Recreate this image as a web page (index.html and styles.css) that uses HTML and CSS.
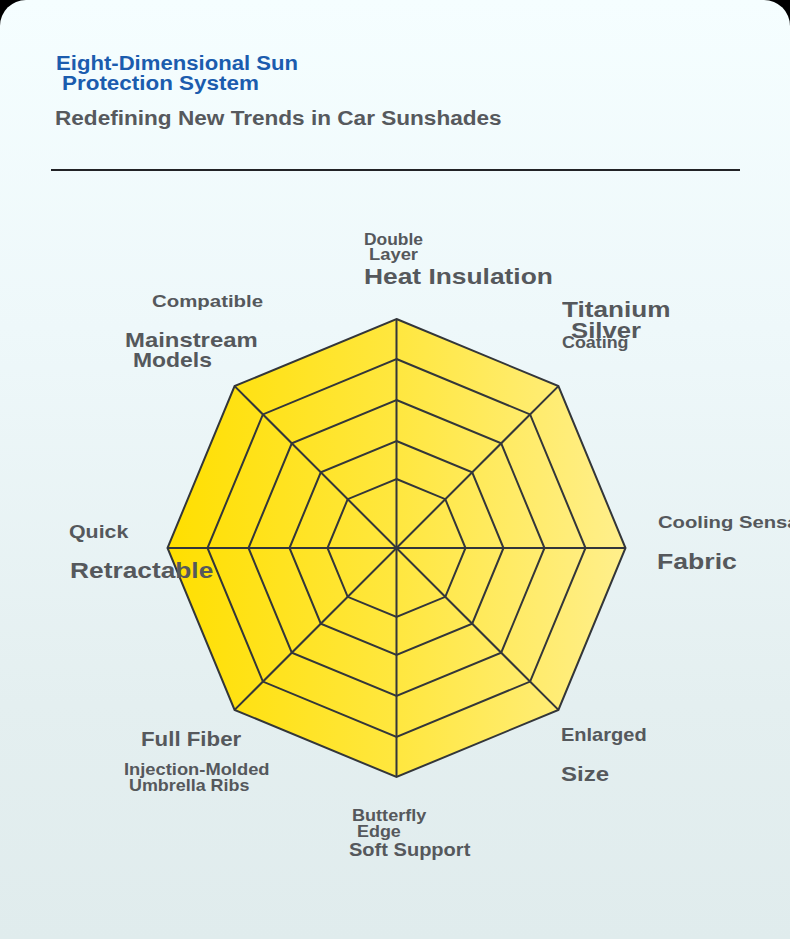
FILE: index.html
```html
<!DOCTYPE html>
<html lang="en">
<head>
<meta charset="utf-8">
<title>Eight-Dimensional Sun Protection System</title>
<link rel="stylesheet" href="styles.css">
</head>
<body>
<div class="page">
  <header class="header">
    <h1 class="title">
      <span class="title-line title-line--one">Eight-Dimensional Sun</span>
      <span class="title-line title-line--two">Protection System</span>
    </h1>
    <p class="subtitle">Redefining New Trends in Car Sunshades</p>
    <div class="rule"></div>
  </header>

  <section class="chart">
    <svg class="radar" width="790" height="769" viewBox="0 0 790 769" xmlns="http://www.w3.org/2000/svg">
      <defs>
        <linearGradient id="fill" x1="167" y1="0" x2="626" y2="0" gradientUnits="userSpaceOnUse">
          <stop offset="0" stop-color="#FFDF00"/>
          <stop offset="0.5" stop-color="#FFE73F"/>
          <stop offset="1" stop-color="#FFEF8C"/>
        </linearGradient>
      </defs>
      <g fill="none" stroke="#33363a" stroke-width="2" stroke-linejoin="miter">
        <polygon fill="url(#fill)" points="396.5,148 558.4,215.1 625.5,377 558.4,538.9 396.5,606 234.6,538.9 167.5,377 234.6,215.1"/>
        <polygon points="396.5,188 530.1,243.4 585.5,377 530.1,510.6 396.5,566 262.9,510.6 207.5,377 262.9,243.4"/>
        <polygon points="396.5,229 501.2,272.3 544.5,377 501.2,481.7 396.5,525 291.8,481.7 248.5,377 291.8,272.3"/>
        <polygon points="396.5,270 472.2,301.3 503.5,377 472.2,452.7 396.5,484 320.8,452.7 289.5,377 320.8,301.3"/>
        <polygon points="396.5,308 445.3,328.2 465.5,377 445.3,425.8 396.5,446 347.7,425.8 327.5,377 347.7,328.2"/>
        <line x1="396.5" y1="148" x2="396.5" y2="606"/>
        <line x1="167.5" y1="377" x2="625.5" y2="377"/>
        <line x1="234.6" y1="215.1" x2="558.4" y2="538.9"/>
        <line x1="558.4" y1="215.1" x2="234.6" y2="538.9"/>
      </g>
    </svg>

    <span class="lbl lbl-double">Double</span>
    <span class="lbl lbl-layer">Layer</span>
    <span class="lbl lbl-heat">Heat Insulation</span>

    <span class="lbl lbl-titanium">Titanium</span>
    <span class="lbl lbl-silver">Silver</span>
    <span class="lbl lbl-coating">Coating</span>

    <span class="lbl lbl-compatible">Compatible</span>
    <span class="lbl lbl-mainstream">Mainstream</span>
    <span class="lbl lbl-models">Models</span>

    <span class="lbl lbl-quick">Quick</span>
    <span class="lbl lbl-retractable">Retractable</span>

    <span class="lbl lbl-cooling">Cooling Sensation</span>
    <span class="lbl lbl-fabric">Fabric</span>

    <span class="lbl lbl-fullfiber">Full Fiber</span>
    <span class="lbl lbl-injection">Injection-Molded</span>
    <span class="lbl lbl-ribs">Umbrella Ribs</span>

    <span class="lbl lbl-enlarged">Enlarged</span>
    <span class="lbl lbl-size">Size</span>

    <span class="lbl lbl-butterfly">Butterfly</span>
    <span class="lbl lbl-edge">Edge</span>
    <span class="lbl lbl-soft">Soft Support</span>
  </section>
</div>
</body>
</html>
```

FILE: styles.css
```css
* {
  box-sizing: border-box;
}

html, body {
  margin: 0;
  padding: 0;
  background: #000;
}

body {
  width: 790px;
  height: 939px;
  overflow: hidden;
  font-family: "Liberation Sans", Arial, sans-serif;
}

.page {
  width: 790px;
  height: 939px;
  border-radius: 26px 26px 0 0;
  background: linear-gradient(180deg, #f5feff 0%, #eef8fa 35%, #e4eff0 75%, #e0eced 100%);
  overflow: hidden;
}

.header {
  padding: 54px 0 0 55px;
}

.title {
  margin: 0;
  font-size: 19.5px;
  line-height: 19.5px;
  font-weight: bold;
  color: #1b5cae;
}

.title-line {
  display: block;
  white-space: nowrap;
  transform-origin: 0 0;
}

.title-line--one {
  margin-left: 1px;
  transform: scaleX(1.134);
}

.title-line--two {
  margin-left: 7px;
  transform: scaleX(1.15);
}

.subtitle {
  margin: 15px 0 0 0;
  font-size: 20px;
  line-height: 20px;
  font-weight: bold;
  color: #56595d;
  white-space: nowrap;
  transform: scaleX(1.129);
  transform-origin: 0 0;
}

.rule {
  margin: 40.6px 0 0 -4px;
  width: 689px;
  height: 2px;
  background: #222326;
}

.chart {
  position: relative;
  width: 790px;
  height: 769px;
}

.radar {
  display: block;
}

.lbl {
  position: absolute;
  white-space: nowrap;
  font-weight: bold;
  line-height: 1;
  color: #55585c;
  transform-origin: 0 0;
}

/* top axis */
.lbl-double { left: 364px; top: 61px; font-size: 16px; transform: scaleX(1.088); }
.lbl-layer { left: 369px; top: 76px; font-size: 16px; transform: scaleX(1.148); }
.lbl-heat { left: 364px; top: 96px; font-size: 21.4px; transform: scaleX(1.232); }

/* top-right axis */
.lbl-titanium { left: 562px; top: 128px; font-size: 22.5px; transform: scaleX(1.162); }
.lbl-silver { left: 571px; top: 150px; font-size: 21.5px; transform: scaleX(1.195); }
.lbl-coating { left: 562px; top: 163px; font-size: 16.3px; transform: scaleX(1.097); }

/* top-left axis */
.lbl-compatible { left: 152px; top: 122px; font-size: 17px; transform: scaleX(1.2); }
.lbl-mainstream { left: 125px; top: 158px; font-size: 21px; transform: scaleX(1.137); }
.lbl-models { left: 133px; top: 178px; font-size: 21px; transform: scaleX(1.092); }

/* left axis */
.lbl-quick { left: 69px; top: 353px; font-size: 17.5px; transform: scaleX(1.22); }
.lbl-retractable { left: 70px; top: 389px; font-size: 22.3px; transform: scaleX(1.18); }

/* right axis */
.lbl-cooling { left: 658px; top: 343px; font-size: 17px; transform: scaleX(1.19); }
.lbl-fabric { left: 657px; top: 380px; font-size: 22px; transform: scaleX(1.21); }

/* bottom-left axis */
.lbl-fullfiber { left: 141px; top: 557px; font-size: 21px; transform: scaleX(1.06); }
.lbl-injection { left: 124px; top: 590px; font-size: 16.3px; transform: scaleX(1.125); }
.lbl-ribs { left: 129px; top: 606px; font-size: 16.3px; transform: scaleX(1.1); }

/* bottom-right axis */
.lbl-enlarged { left: 561px; top: 555px; font-size: 18.2px; transform: scaleX(1.1); }
.lbl-size { left: 561px; top: 593px; font-size: 20.5px; transform: scaleX(1.17); }

/* bottom axis */
.lbl-butterfly { left: 352px; top: 637px; font-size: 16.8px; transform: scaleX(1.077); }
.lbl-edge { left: 357px; top: 653.5px; font-size: 16px; transform: scaleX(1.12); }
.lbl-soft { left: 349px; top: 671px; font-size: 17.7px; transform: scaleX(1.133); }
```
